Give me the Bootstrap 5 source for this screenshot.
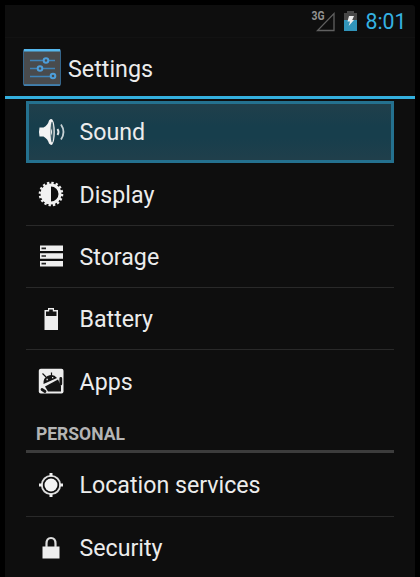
<!DOCTYPE html>
<html lang="en">
<head>
<meta charset="utf-8">
<meta name="viewport" content="width=device-width, initial-scale=1">
<title>Settings</title>
<link href="https://cdn.jsdelivr.net/npm/bootstrap@5.3.0/dist/css/bootstrap.min.css" rel="stylesheet">
<style>
html, body { height: 577px; overflow: hidden; background: #000; }
body { font-family: Roboto, "Liberation Sans", sans-serif; color: #ececec; padding: 5px 5px 0; }
.screen { background: #0e0e0e; height: 572px; border-top-right-radius: 3px; }
.statusbar { height: 33px; padding-right: 8.5px; color: #35b2e2; border-bottom: 1px solid #121212; }
.status-battery { margin: 0 8.5px 0 7px; }
.clock { font-size: 21.3px; line-height: 33px; }
.titlebar { height: 61px; padding-left: 18px; border-bottom: 3px solid #34b0de; }
.titlebar h1 { font-size: 23.3px; line-height: 30px; font-weight: 400; margin-left: 7px; padding-top: 3px; }
.options { margin: 1px 21px 0; }
.option { height: 62.3px; padding-left: 11px; color: inherit; }
.option + .option { border-top: 1px solid #292929; }
.option span { font-size: 23.2px; line-height: 30px; margin-left: 14.5px; padding-top: 1px; }
.option svg { width: 28px; height: 28px; flex: none; }
.option.chosen { border: 3px solid #24718f; padding-left: 8px; background: linear-gradient(#203f4b, #173e4c 40%, #173e4c 60%, #203f4b); height: 62px; margin-top: 1.5px; }
.option.chosen + .option { border-top-color: transparent; }
.section-title { font-size: 17.5px; line-height: 22px; font-weight: 700; color: #b4b4b4; height: 41px; padding: 11px 0 0 10px; border-bottom: 3px solid #3c3c3c; margin: 0 21px; }
</style>
</head>
<body>
<main class="screen">
  <div class="statusbar d-flex align-items-center justify-content-end">
    <svg width="26" height="24" viewBox="0 0 26 24"><path d="M6.500 21.500H23V4.500Z" fill="none" stroke="#606060" stroke-width="1.300"/><text x="0.500" y="11" font-size="12" font-weight="700" fill="#929292" textLength="13" lengthAdjust="spacingAndGlyphs">3G</text></svg>
    <svg class="status-battery" width="13" height="20" viewBox="0 0 13 20"><path d="M0 2h3V0h7v2h3v8H0Z" fill="#484848"/><path d="M0 9h13v11H0Z" fill="#3194ba"/><path d="M5 5h5L8.200 9H10L4.700 15 6 10.500H3.500Z" fill="#eee"/></svg>
    <span class="clock">8:01</span>
  </div>
  <header class="titlebar d-flex align-items-center">
    <svg width="38" height="38" viewBox="0 0 38 38">
      <rect x=".5" y="1.500" width="37" height="36" rx="1" fill="#494b4d" stroke="#35658a"/>
      <path d="M1 1h36v2.500H1Z" fill="#55b7ed"/><path d="M1 37h36" stroke="#4388bb" stroke-width="1.500"/>
      <g fill="none" stroke="#3f83b8" stroke-width="1.600"><path d="M7 12.500h13m6 0h6M7 20.500h7m6 0h12M7 28.500h20"/><g stroke="#4d9eda" stroke-width="2"><circle cx="23" cy="12.500" r="2.300"/><circle cx="17" cy="20.500" r="2.300"/><circle cx="30" cy="28" r="2.300"/></g></g>
    </svg>
    <h1 class="mb-0">Settings</h1>
  </header>
  <div class="options">
    <a class="option chosen d-flex align-items-center text-decoration-none">
      <svg viewBox="0 0 28 28"><path d="M2.500 9.500h4Q11 7 12 2.500 14 .3 15.300 1.500q2.500 3.500 2.500 12.500t-2.500 12.500q-1.300 1.200-3.300-1Q11 21 6.500 18.500h-4q-1-4.500 0-9Z" fill="#f4f4f4"/><ellipse cx="15" cy="14" rx="1.500" ry="10.500" fill="#40606b"/><path d="M14 10.500q2 3.500 0 7Z" fill="#eee"/><path d="M20.500 11q2 3 0 6" fill="none" stroke="#e2e7e9" stroke-width="1.900"/><path d="M24 6.500q5 7.500 0 15" fill="none" stroke="#c6d0d4" stroke-width="1.800"/></svg>
      <span>Sound</span>
    </a>
    <a class="option d-flex align-items-center text-decoration-none">
      <svg viewBox="0 0 28 28"><circle cx="14" cy="14" r="10.800" fill="none" stroke="#eee" stroke-width="3" stroke-dasharray="2.300 1.941"/><circle cx="14" cy="14" r="9" fill="none" stroke="#f2f2f2" stroke-width="3"/><path d="M14 5a9 9 0 0 0 0 18Z" fill="#f2f2f2"/></svg>
      <span>Display</span>
    </a>
    <a class="option d-flex align-items-center text-decoration-none">
      <svg viewBox="0 0 28 28"><path d="M3 3.500h23v5.500H3ZM3 11.300h23v5.500H3ZM3 19h23v5.500H3Z" fill="#eee"/><path d="M4.500 6.300H9M4.500 14H9M4.500 21.700H9" stroke="#222" stroke-width="1.700"/></svg>
      <span>Storage</span>
    </a>
    <a class="option d-flex align-items-center text-decoration-none">
      <svg viewBox="0 0 28 28"><path d="M7.500 5H11V3h6v2h4v20H7.500Z" fill="#eee"/><path d="M9 6.500h3.200v-2h3.600v2h3.700V11H9Z" fill="#161616"/></svg>
      <span>Battery</span>
    </a>
    <a class="option d-flex align-items-center text-decoration-none">
      <svg viewBox="0 0 28 28"><rect x="1.800" y="1.800" width="24.700" height="24.700" rx="2" fill="#eee"/><path d="M6.500 17Q6 11 10.500 9q6-2.500 9.500 2Z" fill="#151515"/><path d="M9 10 5.500 6.500M14.500 9V5.500" stroke="#151515" stroke-width="1.200"/><path d="M8 19.500 21 12.500 24 19v5.500H11Z" fill="#151515"/><path d="M23.800 11.500V17M5 22.500l3 2" stroke="#151515" stroke-width="2.800" stroke-linecap="round"/><path d="M9.500 12.500h1.300M15 10.700h1.300" stroke="#eee" stroke-width="1.300"/></svg>
      <span>Apps</span>
    </a>
  </div>
  <h2 class="section-title">PERSONAL</h2>
  <div class="options">
    <a class="option d-flex align-items-center text-decoration-none">
      <svg viewBox="0 0 28 28"><circle cx="14" cy="14" r="6.500" fill="#f4f4f4"/><circle cx="14" cy="14" r="9.200" fill="none" stroke="#ddd" stroke-width="1.800"/><path d="M14 2v3.500M14 22.500V26M2 14h3.500M22.500 14H26" stroke="#eee" stroke-width="3"/></svg>
      <span>Location services</span>
    </a>
    <a class="option d-flex align-items-center text-decoration-none">
      <svg viewBox="0 0 28 28"><path d="M5.500 12.500h17v12h-17Z" fill="#eee"/><path d="M9.500 13V9.500q0-5.500 4.500-5.500t4.500 5.500V13" fill="none" stroke="#ddd" stroke-width="2.200"/></svg>
      <span>Security</span>
    </a>
  </div>
</main>
<script src="https://cdn.jsdelivr.net/npm/bootstrap@5.3.0/dist/js/bootstrap.bundle.min.js"></script>
</body>
</html>
